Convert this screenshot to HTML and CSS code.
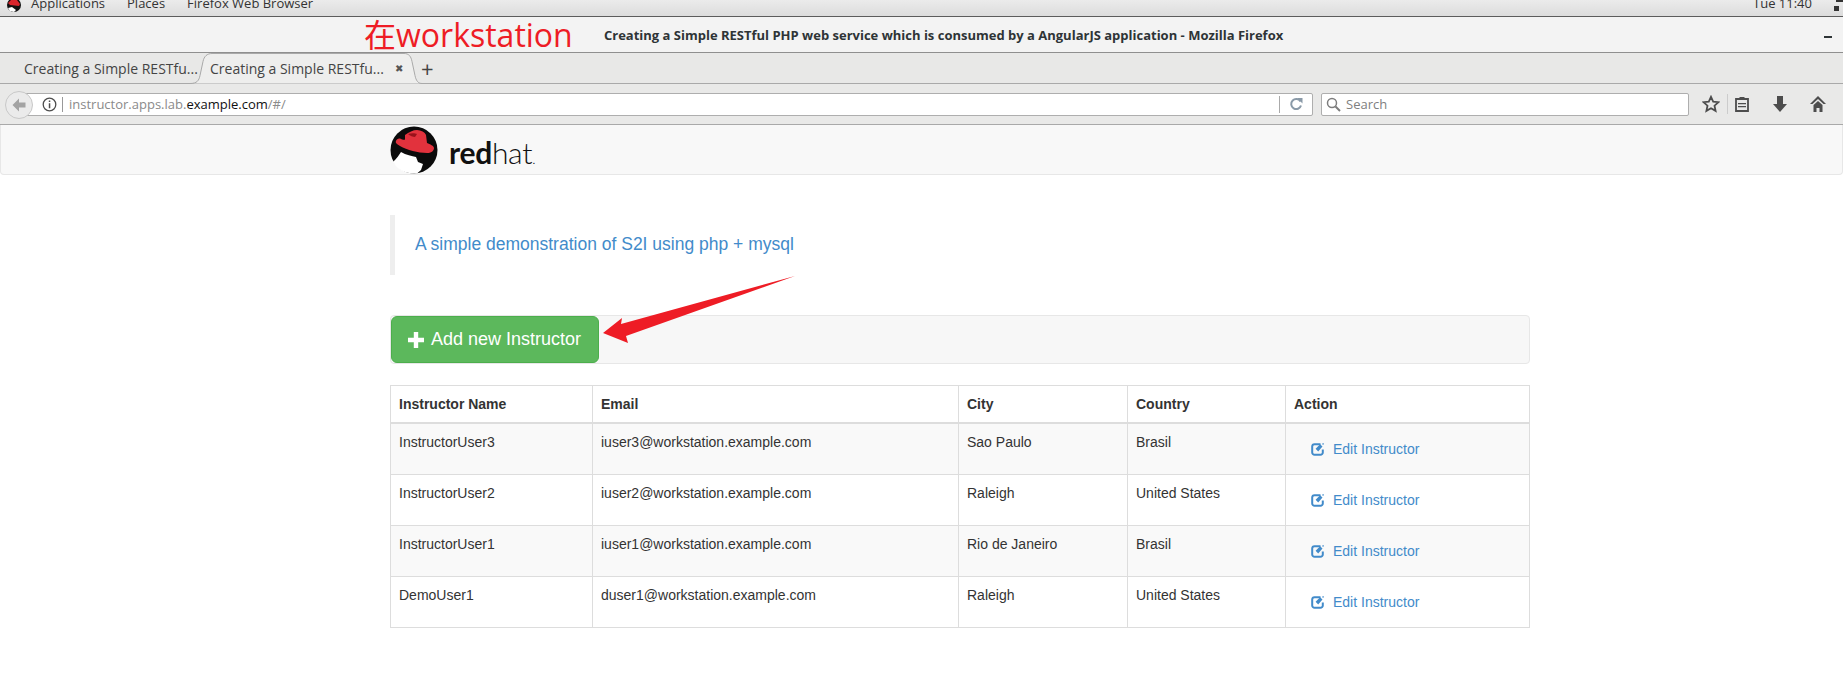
FILE: index.html
```html
<!DOCTYPE html>
<html>
<head>
    <title>Creating a Simple RESTful PHP web service</title>
    <link rel="stylesheet" href="styles.css">
</head>
<body>
    <svg class="defs" width="0" height="0">
        <symbol id="edit" viewBox="0 0 14 14">
            <path d="M9.5 2.2H3.6A2.4 2.4 0 0 0 1.2 4.6v5.8a2.4 2.4 0 0 0 2.4 2.4h5.8a2.4 2.4 0 0 0 2.4-2.4V7.6" fill="none" stroke="#428bca" stroke-width="2"/>
            <path d="M4.6 6.8l2.6 2.6 4.3-5-2.4-2.1zM12 .9l-.9 1.1 1 .9.9-1.1z" fill="#428bca"/>
        </symbol>
    </svg>

    <div class="topbar">
        <svg class="topbar-logo" width="14" height="14" viewBox="0 0 14 14"><circle cx="7" cy="5" r="7" fill="#111"/><path d="M1 3l3-3h6l3 4-1 2-9-1z" fill="#d9252c"/><path d="M1 8l4-1 4 3-2 2-4-1z" fill="#fff"/></svg>
        <span class="topbar-item first">Applications</span>
        <span class="topbar-item">Places</span>
        <span class="topbar-item">Firefox Web Browser</span>
        <span class="topbar-clock">Tue 11:40</span>
        <span class="topbar-net"><i></i><b></b></span>
    </div>

    <div class="titlebar">
        <span class="window-title">Creating a Simple RESTful PHP web service which is consumed by a AngularJS application - Mozilla Firefox</span>
        <span class="minimize"></span>
    </div>

    <div class="tabstrip">
        <div class="tab">
            <span class="tab-label">Creating a Simple RESTfu...</span>
            <span class="tab-close">&#10006;</span>
        </div>
        <div class="tab tab-active">
            <svg class="tab-shape" width="232" height="31" viewBox="0 0 232 31"><path d="M0 30.5c7 0 9-3 10-8l3-14c1-5 4-8 9-8h192c5 0 7 3 8 8l3 14c1 5 3 8 7 8" fill="#eeeeed" stroke="#a9a9a9"/></svg>
            <span class="tab-label">Creating a Simple RESTfu...</span>
            <span class="tab-close">&#10006;</span>
        </div>
        <span class="tab-new">+</span>
    </div>

    <div class="toolbar">
        <div class="back">
            <svg width="16" height="16" viewBox="0 0 16 16"><path d="M8 1.5L1.5 8 8 14.5V10.500h6.500v-5H8z" fill="#a3a3a3"/></svg>
        </div>
        <div class="urlbar">
            <svg class="url-info" width="15" height="15" viewBox="0 0 15 15"><circle cx="7.500" cy="7.500" r="6.300" fill="none" stroke="#4d4d4d" stroke-width="1.300"/><path d="M6.800 3.500h1.500v1.500H6.800zM6.800 6.300h1.500v5H6.800z" fill="#4d4d4d"/></svg>
            <span class="url-text">instructor.apps.lab.<em>example.com</em>/#/</span>
            <span class="url-reload">
                <svg width="14" height="14" viewBox="0 0 14 14"><path d="M11.500 4.500A5 5 0 1 0 12 8.500" fill="none" stroke="#8a9aa8" stroke-width="2"/><path d="M8 1h5.500v5.500z" fill="#8a9aa8"/></svg>
            </span>
        </div>
        <div class="searchbar">
            <svg width="15" height="15" viewBox="0 0 15 15"><circle cx="6" cy="6" r="4.500" fill="none" stroke="#7d7d7d" stroke-width="1.500"/><path d="M9.500 9.500l4.500 4.500" stroke="#7d7d7d" stroke-width="2"/></svg>
            <span>Search</span>
        </div>
        <div class="tool-icons">
            <svg width="18" height="18" viewBox="0 0 18 18"><path d="M9 1.800l2.200 4.800 5.200.6-3.900 3.500 1.100 5.200L9 13.300l-4.600 2.600 1.100-5.200L1.600 7.200l5.200-.6z" fill="none" stroke="#4d4d4d" stroke-width="1.800"/></svg>
            <span class="tool-sep"></span>
            <svg class="tool-list" width="16" height="18" viewBox="0 0 16 18"><path d="M2 4h12v12H2z" fill="none" stroke="#4d4d4d" stroke-width="1.800"/><path d="M5.500 2h5v3h-5zM4 8h8v1.300H4zM4 11h8v1.300H4z" fill="#4d4d4d"/></svg>
            <svg class="tool-down" width="16" height="18" viewBox="0 0 16 18"><path d="M5 1h6v8h4l-7 8-7-8h4z" fill="#4d4d4d"/></svg>
            <svg class="tool-home" width="18" height="18" viewBox="0 0 18 18"><path d="M9 1L1 9h2.500L9 4l5.500 5H17z" fill="#4d4d4d"/><path d="M4.500 10L9 6l4.500 4v7H10.500v-4h-3v4h-3z" fill="#4d4d4d"/></svg>
        </div>
    </div>

    <div class="site-header">
        <div class="brand">
            <svg width="48" height="48" viewBox="0 0 48 48">
                <circle cx="24" cy="24" r="23.500" fill="#0b0b0b"/>
                <path d="M3 36C7 32 9 29 11 26c5 3 11 4 15 5l2 5 5 2-2 6-4 3.500h-4C12 47 7 42 3 36z" fill="#fff"/>
                <path d="M15 9c4-3 8-5 12-5 4 .5 8 2 9 5l1 8c3 1 7 3 7 5 0 3-3 5-7 5-9 0-20-3-27-7-3-2-5-3-4-5 .5-2 3-3 5-2 1 .5 3 1 4 .5z" fill="#e2323d"/>
                <path d="M18 8c3-1 7-1 9 0l-2 3c-2 0-5-1-7-3z" fill="#99121b"/>
            </svg>
            <span class="wordmark"><b>red</b>hat<small>.</small></span>
        </div>
    </div>

    <div class="content">
        <blockquote class="lead">A simple demonstration of S2I using php + mysql</blockquote>

        <div class="action-panel">
            <button class="btn-add"><svg width="16" height="16" viewBox="0 0 16 16"><path d="M5.800 0h4.400v5.800H16v4.400h-5.800V16H5.800v-5.800H0V5.800h5.800z" fill="#fff"/></svg> Add new Instructor</button>
        </div>

        <table class="instructors">
            <colgroup>
                <col class="col-name"><col class="col-email"><col class="col-city"><col class="col-country"><col>
            </colgroup>
            <thead>
                <tr><th>Instructor Name</th><th>Email</th><th>City</th><th>Country</th><th>Action</th></tr>
            </thead>
            <tbody>
                <tr>
                    <td>InstructorUser3</td><td>iuser3@workstation.example.com</td><td>Sao Paulo</td><td>Brasil</td>
                    <td><a class="edit-link"><svg width="14" height="14"><use href="#edit"/></svg>Edit Instructor</a></td>
                </tr>
                <tr>
                    <td>InstructorUser2</td><td>iuser2@workstation.example.com</td><td>Raleigh</td><td>United States</td>
                    <td><a class="edit-link"><svg width="14" height="14"><use href="#edit"/></svg>Edit Instructor</a></td>
                </tr>
                <tr>
                    <td>InstructorUser1</td><td>iuser1@workstation.example.com</td><td>Rio de Janeiro</td><td>Brasil</td>
                    <td><a class="edit-link"><svg width="14" height="14"><use href="#edit"/></svg>Edit Instructor</a></td>
                </tr>
                <tr>
                    <td>DemoUser1</td><td>duser1@workstation.example.com</td><td>Raleigh</td><td>United States</td>
                    <td><a class="edit-link"><svg width="14" height="14"><use href="#edit"/></svg>Edit Instructor</a></td>
                </tr>
            </tbody>
        </table>
    </div>

    <!-- red annotations drawn on top of the screenshot -->
    <div class="note">在workstation</div>
    <svg class="note-arrow" width="210" height="70" viewBox="0 0 210 70">
        <path d="M9 59L28 44l-1 6L201 2 32 62l2 7z" fill="#ee1c25"/>
    </svg>
</body>
</html>
```

FILE: styles.css
```css
body {
    font-family: "Liberation Sans", Arial, sans-serif;
    font-size: 14px;
    color: #333;
    margin: 0;
    padding: 0;
    background-color: #fff;
    position: relative;
    height: 677px;
    overflow: hidden;
}
.defs {
    display: block;
    height: 0;
}

/* desktop top bar */
.topbar {
    height: 16px;
    display: flex;
    align-items: flex-start;
    overflow: hidden;
    background: linear-gradient(#ebebeb, #dcdcdc);
    border-bottom: 1px solid #5c5c5c;
    font-family: "Open Sans", sans-serif;
    font-size: 13px;
    color: #333;
}
.topbar-logo {
    margin: 0 0 0 7px;
}
.topbar-item {
    margin: -6px 0 0 22px;
    line-height: 18px;
}
.topbar-item.first {
    margin-left: 10px;
}
.topbar-clock {
    margin: -6px 0 0 auto;
    line-height: 18px;
}
.topbar-net {
    width: 9px;
    height: 16px;
    margin-left: 22px;
    position: relative;
}
.topbar-net i {
    position: absolute;
    left: 0;
    top: 6px;
    width: 5px;
    height: 5px;
    background: #333;
}
.topbar-net b {
    position: absolute;
    left: 2px;
    top: 0;
    width: 7px;
    height: 2px;
    background: #333;
}

/* window title */
.titlebar {
    height: 35px;
    display: flex;
    align-items: center;
    background: #f3f3f3;
    border-bottom: 1px solid #8f8f8f;
    padding: 0 11px 0 604px;
}
.window-title {
    font-family: "Open Sans", sans-serif;
    font-weight: 700;
    font-size: 13px;
    color: #2e3436;
    white-space: nowrap;
}
.minimize {
    width: 8px;
    height: 2px;
    background: #2e3436;
    margin: 4px 0 0 auto;
}

/* firefox tabs */
.tabstrip {
    height: 30px;
    display: flex;
    align-items: center;
    background: #e8e8e7;
    border-bottom: 1px solid #a9a9a9;
    font-family: "Open Sans", sans-serif;
    font-size: 14px;
    color: #444;
}
.tab {
    width: 198px;
    padding-left: 24px;
    display: flex;
    align-items: center;
    box-sizing: border-box;
    height: 30px;
    position: relative;
}
.tab-active {
    width: 215px;
    padding-left: 12px;
}
.tab-shape {
    position: absolute;
    left: -8px;
    top: 0;
}
.tab-label {
    width: 174px;
    white-space: nowrap;
    position: relative;
}
.tab-close {
    font-size: 10px;
    color: #555;
    margin-left: 11px;
    position: relative;
}
.tab-new {
    font-size: 22px;
    font-weight: 400;
    margin-left: 8px;
    color: #444;
    position: relative;
}

/* firefox navigation bar */
.toolbar {
    height: 40px;
    display: flex;
    align-items: center;
    background: #e9e9e8;
    border-bottom: 1px solid #a9a9a9;
    position: relative;
}
.back {
    position: absolute;
    left: 5px;
    top: 7px;
    width: 26px;
    height: 26px;
    border: 1px solid #c8c8c8;
    border-radius: 50%;
    background: #ebebeb;
    display: flex;
    align-items: center;
    justify-content: center;
}
.urlbar {
    width: 1288px;
    height: 23px;
    margin-left: 25px;
    background: #fff;
    border: 1px solid #aeaeae;
    border-radius: 0 2px 2px 0;
    display: flex;
    align-items: center;
    box-sizing: border-box;
    font-family: "Open Sans", sans-serif;
    font-size: 13px;
    color: #8a8a8a;
}
.url-info {
    margin-left: 16px;
    padding-right: 5px;
    border-right: 1px solid #999;
}
.url-text {
    margin-left: 6px;
}
.url-text em {
    font-style: normal;
    color: #111;
}
.url-reload {
    margin-left: auto;
    width: 32px;
    height: 17px;
    border-left: 1px solid #aaa;
    display: flex;
    align-items: center;
    justify-content: center;
}
.searchbar {
    width: 368px;
    height: 23px;
    margin-left: 8px;
    background: #fff;
    border: 1px solid #aeaeae;
    border-radius: 2px;
    display: flex;
    align-items: center;
    gap: 5px;
    padding-left: 4px;
    box-sizing: border-box;
    font-family: "Open Sans", sans-serif;
    font-size: 13px;
    color: #808080;
}
.tool-icons {
    display: flex;
    align-items: center;
    margin-left: 13px;
}
.tool-sep {
    width: 1px;
    height: 20px;
    background: #ccc;
    margin-left: 7px;
}
.tool-list {
    margin-left: 6px;
}
.tool-down {
    margin-left: 22px;
}
.tool-home {
    margin-left: 21px;
}

/* site */
.site-header {
    height: 49px;
    background: #f8f8f8;
    border: 1px solid #e7e7e7;
    border-top: none;
    border-radius: 0 0 4px 4px;
    padding-left: 389px;
}
.brand {
    display: flex;
    align-items: center;
    height: 49px;
}
.wordmark {
    font-family: Lato, sans-serif;
    font-weight: 300;
    font-size: 30px;
    color: #111;
    margin-left: 11px;
    letter-spacing: -0.3px;
    position: relative;
    top: 2px;
}
.wordmark b {
    font-weight: 700;
}
.wordmark small {
    font-size: 14px;
}
.content {
    width: 1140px;
    margin: 40px 0 0 390px;
}
.lead {
    margin: 0 0 40px;
    padding: 17px 20px;
    height: 60px;
    box-sizing: border-box;
    border-left: 5px solid #eee;
    font-size: 17.5px;
    line-height: 25px;
    color: #428bca;
}
.action-panel {
    height: 49px;
    box-sizing: border-box;
    padding: 0;
    background: #f7f7f7;
    border: 1px solid #e7e7e7;
    border-radius: 4px;
    margin-bottom: 21px;
}
.btn-add {
    display: flex;
    align-items: center;
    gap: 7px;
    width: 208px;
    height: 47px;
    padding: 0 16px;
    background-color: #5cb85c;
    color: #fff;
    font-family: "Liberation Sans", Arial, sans-serif;
    font-size: 18px;
    border: 1px solid #4cae4c;
    border-radius: 6px;
}
.instructors {
    width: 1140px;
    table-layout: fixed;
    border-collapse: collapse;
    border: 2px solid #ddd;
    border-width: 1px;
}
.col-name {
    width: 202px;
}
.col-email {
    width: 366px;
}
.col-city {
    width: 169px;
}
.col-country {
    width: 158px;
}
.instructors th {
    text-align: left;
    font-weight: 700;
    line-height: 20px;
    padding: 8px;
    border: 1px solid #ddd;
    border-bottom: 2px solid #ddd;
}
.instructors td {
    vertical-align: top;
    line-height: 20px;
    padding: 8px;
    height: 34px;
    border: 1px solid #ddd;
}
.instructors tbody tr:nth-child(odd) {
    background-color: #f9f9f9;
}
.edit-link {
    display: flex;
    align-items: center;
    gap: 8px;
    height: 34px;
    padding-left: 17px;
    color: #428bca;
}

/* annotations */
.note {
    position: absolute;
    left: 364px;
    top: 15px;
    font-family: "Open Sans", "Noto Sans CJK SC", sans-serif;
    font-size: 32px;
    line-height: 40px;
    color: #ee1c25;
    white-space: nowrap;
}
.note-arrow {
    position: absolute;
    left: 594px;
    top: 274px;
}
```
